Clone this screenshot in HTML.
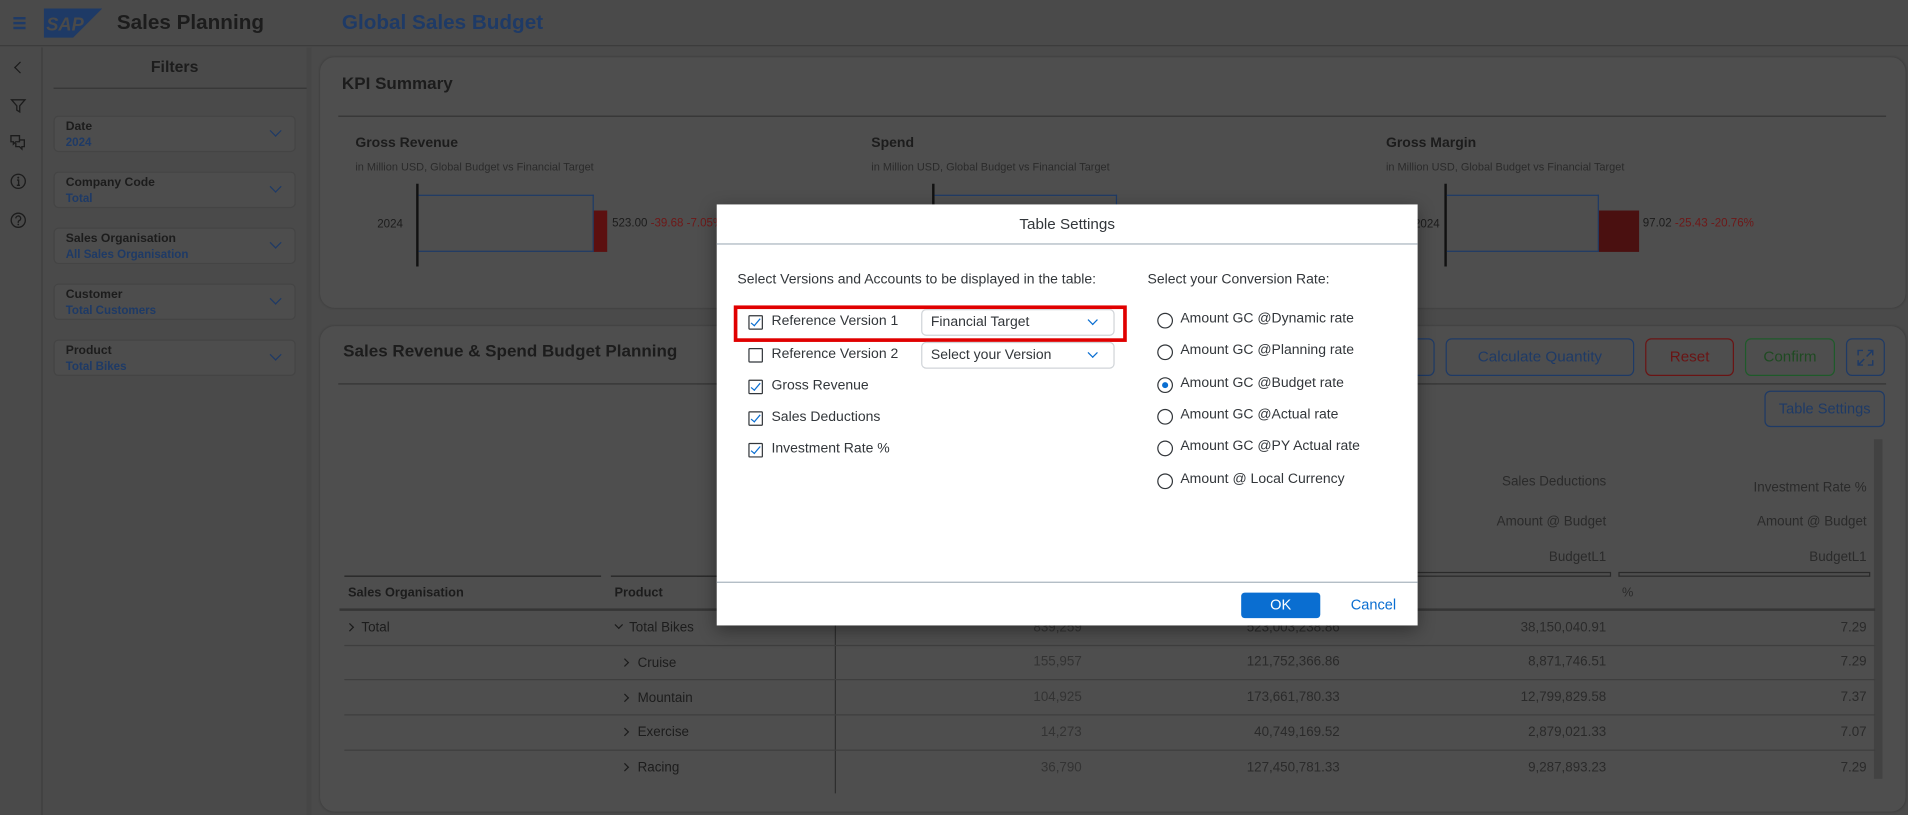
<!DOCTYPE html>
<html><head><meta charset="utf-8"><style>
*{margin:0;padding:0;box-sizing:border-box}
html,body{width:1908px;height:815px;overflow:hidden;background:#4a4a4a}
#w{position:absolute;left:0;top:0;width:1568px;height:670px;transform:scale(1.21684);transform-origin:0 0;font-family:"Liberation Sans",sans-serif;color:#1c1c1c;font-size:11px}
.a{position:absolute;white-space:nowrap}
.card{position:absolute;background:#4e4e4e;border-radius:12px;box-shadow:0 0 2px rgba(0,0,0,.25)}
.hl{position:absolute;height:1px;background:#333}
.fb{position:absolute;left:44px;width:199px;height:30px;border:1px solid #444;border-radius:4px;background:#4d4d4d}
.fb .l{position:absolute;left:9px;top:3px;font-size:10px;font-weight:bold;color:#1c1c1c}
.fb .v{position:absolute;left:9px;top:16px;font-size:9.5px;font-weight:bold;color:#1e3a66}
.chev{position:absolute;width:7px;height:7px;border-right:1.3px solid #1e3a66;border-bottom:1.3px solid #1e3a66;transform:rotate(45deg)}
.rc{position:absolute;width:5px;height:5px;border-right:1.3px solid #1c1c1c;border-bottom:1.3px solid #1c1c1c;transform:rotate(-45deg)}
.btn{position:absolute;height:31px;border:1px solid #1e3a66;border-radius:5px;color:#1e3a66;font-size:12.5px;text-align:center;line-height:29px}
.num{position:absolute;text-align:right;color:#2a2a2a;font-size:11px}
.dlg{position:absolute;left:589px;top:168px;width:576px;height:346px;background:#fff;color:#32363a;box-shadow:0 4px 14px rgba(0,0,0,.4)}
.cb{position:absolute;left:26px;width:12px;height:12px;border:1.3px solid #32363a;border-radius:1px}
.cb.on::after{content:"";position:absolute;left:3px;top:0px;width:3px;height:7px;border-right:1.3px solid #0a6ed1;border-bottom:1.3px solid #0a6ed1;transform:rotate(40deg)}
.rd{position:absolute;left:362px;width:13px;height:13px;border:1.4px solid #32363a;border-radius:50%}
.rd.on::after{content:"";position:absolute;left:2.5px;top:2.5px;width:5px;height:5px;border-radius:50%;background:#0a6ed1}
.dt{font-size:11.5px}
.sel{position:absolute;left:168px;width:159px;height:22px;border:1px solid #d0d4d8;border-radius:4px;font-size:11.5px;padding:4px 7px}
.sel .chev{right:14px;top:5px;border-color:#0a6ed1;width:6px;height:6px;border-width:0 1px 1px 0}
</style></head><body><div id="w">
<div class="a" style="left:0;top:0;width:1568px;height:38px;background:#4a4a4a;border-bottom:1px solid #3c3c3c"></div>
<div class="a" style="left:11px;top:14px;width:10px;height:2px;background:#1e3a66;box-shadow:0 4px 0 #1e3a66,0 8px 0 #1e3a66"></div>
<svg class="a" style="left:36px;top:7px" width="48" height="24" viewBox="0 0 48 24"><polygon points="0,0 48,0 24,24 0,24" fill="#1e3a66"/><text x="2" y="18" font-family="Liberation Sans" font-weight="bold" font-style="italic" font-size="15" fill="#4a4a4a">SAP</text></svg>
<div class="a" style="left:96px;top:9px;font-size:17px;font-weight:bold;color:#1c1c1c">Sales Planning</div>
<div class="a" style="left:281px;top:9px;font-size:17px;font-weight:bold;color:#1e3a66">Global Sales Budget</div>
<div class="a" style="left:34px;top:39px;width:1px;height:631px;background:#3e3e3e"></div>
<div class="a" style="left:13px;top:52px;width:7px;height:7px;border-left:1.6px solid #1c1c1c;border-bottom:1.6px solid #1c1c1c;transform:rotate(45deg)"></div>
<svg class="a" style="left:8px;top:80px" width="14" height="14" viewBox="0 0 14 14"><path d="M1.5 2h11l-4.3 5v5l-2.4-1.5V7z" fill="none" stroke="#1c1c1c" stroke-width="1.1"/></svg>
<svg class="a" style="left:8px;top:110px" width="14" height="14" viewBox="0 0 14 14"><path d="M1 1.5h7v5H5L3 8.5V6.5H1z M5 7.5v3h3l2 2v-2h2V5H8.5" fill="none" stroke="#1c1c1c" stroke-width="1.1"/></svg>
<svg class="a" style="left:8px;top:142px" width="14" height="14" viewBox="0 0 14 14"><circle cx="7" cy="7" r="5.8" fill="none" stroke="#1c1c1c" stroke-width="1.1"/><path d="M6 6h1.3v4.3M5.8 10.3h2.6" stroke="#1c1c1c" fill="none" stroke-width="1.1"/><circle cx="7" cy="4" r=".8" fill="#1c1c1c"/></svg>
<svg class="a" style="left:8px;top:174px" width="14" height="14" viewBox="0 0 14 14"><circle cx="7" cy="7" r="5.8" fill="none" stroke="#1c1c1c" stroke-width="1.1"/><path d="M5 5.5a2 2 0 1 1 2.6 1.9c-.5.2-.6.6-.6 1.2v.6" stroke="#1c1c1c" fill="none" stroke-width="1.1"/><circle cx="7" cy="10.5" r=".7" fill="#1c1c1c"/></svg>
<div class="a" style="left:252px;top:39px;width:4px;height:631px;background:#464646"></div>
<div class="a" style="left:124px;top:47px;font-size:13px;font-weight:bold">Filters</div>
<div class="hl" style="left:44px;top:72px;width:208px;background:#353535"></div>
<div class="fb" style="top:95px"><div class="l">Date</div><div class="v">2024</div><div class="chev" style="left:178px;top:8px"></div></div>
<div class="fb" style="top:141px"><div class="l">Company Code</div><div class="v">Total</div><div class="chev" style="left:178px;top:8px"></div></div>
<div class="fb" style="top:187px"><div class="l">Sales Organisation</div><div class="v">All Sales Organisation</div><div class="chev" style="left:178px;top:8px"></div></div>
<div class="fb" style="top:233px"><div class="l">Customer</div><div class="v">Total Customers</div><div class="chev" style="left:178px;top:8px"></div></div>
<div class="fb" style="top:279px"><div class="l">Product</div><div class="v">Total Bikes</div><div class="chev" style="left:178px;top:8px"></div></div>
<div class="card" style="left:263px;top:47px;width:1303px;height:206px"></div>
<div class="a" style="left:281px;top:60px;font-size:14px;font-weight:bold">KPI Summary</div>
<div class="hl" style="left:278px;top:95px;width:1272px"></div>
<div class="a" style="left:292px;top:112px;font-size:11.5px;font-weight:bold">Gross Revenue</div>
<div class="a" style="left:292px;top:132px;font-size:9px;color:#2a2a2a">in Million USD, Global Budget vs Financial Target</div>
<div class="a" style="left:310px;top:179px;font-size:9.5px">2024</div>
<div class="a" style="left:342px;top:151px;width:2px;height:68px;background:#111"></div>
<div class="a" style="left:344px;top:160px;width:144px;height:47px;border:1.5px solid #1e3a66;border-left:none"></div>
<div class="a" style="left:488px;top:173px;width:11px;height:34px;background:#5c1010"></div>
<div class="a" style="left:503px;top:178px;font-size:9.5px">523.00 <span style="color:#6e1818">-39.68 -7.05%</span></div>
<div class="a" style="left:716px;top:112px;font-size:11.5px;font-weight:bold">Spend</div>
<div class="a" style="left:716px;top:132px;font-size:9px;color:#2a2a2a">in Million USD, Global Budget vs Financial Target</div>
<div class="a" style="left:766px;top:151px;width:2px;height:20px;background:#111"></div>
<div class="a" style="left:768px;top:160px;width:150px;height:12px;border:1.5px solid #1e3a66;border-left:none;border-bottom:none"></div>
<div class="a" style="left:1139px;top:112px;font-size:11.5px;font-weight:bold">Gross Margin</div>
<div class="a" style="left:1139px;top:132px;font-size:9px;color:#2a2a2a">in Million USD, Global Budget vs Financial Target</div>
<div class="a" style="left:1162px;top:179px;font-size:9.5px">2024</div>
<div class="a" style="left:1187px;top:151px;width:2px;height:68px;background:#111"></div>
<div class="a" style="left:1189px;top:160px;width:125px;height:47px;border:1.5px solid #1e3a66;border-left:none"></div>
<div class="a" style="left:1314px;top:173px;width:33px;height:34px;background:#4a1010"></div>
<div class="a" style="left:1350px;top:178px;font-size:9.5px">97.02 <span style="color:#6e1818">-25.43 -20.76%</span></div>
<div class="card" style="left:263px;top:268px;width:1303px;height:399px"></div>
<div class="a" style="left:282px;top:280px;font-size:14px;font-weight:bold">Sales Revenue &amp; Spend Budget Planning</div>
<div class="hl" style="left:278px;top:315px;width:1272px"></div>
<div class="btn" style="left:1140px;top:278px;width:39px"></div>
<div class="btn" style="left:1188px;top:278px;width:155px">Calculate Quantity</div>
<div class="btn" style="left:1352px;top:278px;width:73px;border-color:#6a1414;color:#6a1414">Reset</div>
<div class="btn" style="left:1434px;top:278px;width:74px;border-color:#1f5a2a;color:#1f4a22">Confirm</div>
<div class="btn" style="left:1517px;top:278px;width:32px"><svg width="14" height="14" viewBox="0 0 14 14" style="margin-top:8px"><path d="M1 5V1h4M9 1h4v4M13 9v4H9M5 13H1V9M8 6l5-5M1 13l5-5" fill="none" stroke="#1e3a66" stroke-width="1.2"/></svg></div>
<div class="btn" style="left:1450px;top:321px;width:99px;height:30px;line-height:28px;font-size:12px">Table Settings</div>
<div class="a" style="left:1540px;top:361px;width:7px;height:279px;background:#424242"></div>
<div class="num" style="left:1180px;top:390px;width:140px">Sales Deductions</div>
<div class="num" style="left:1380px;top:395px;width:154px">Investment Rate %</div>
<div class="num" style="left:1180px;top:423px;width:140px">Amount @ Budget</div>
<div class="num" style="left:1380px;top:423px;width:154px">Amount @ Budget</div>
<div class="num" style="left:1180px;top:452px;width:140px">BudgetL1</div>
<div class="num" style="left:1380px;top:452px;width:154px">BudgetL1</div>
<div class="a" style="left:1100px;top:470px;width:224px;height:4px;border:1px solid #2a2a2a"></div>
<div class="a" style="left:1330px;top:470px;width:207px;height:4px;border:1px solid #2a2a2a"></div>
<div class="a" style="left:1333px;top:481px;font-size:10.5px;color:#2a2a2a">%</div>
<div class="hl" style="left:283px;top:473px;width:211px;background:#222"></div>
<div class="hl" style="left:502px;top:473px;width:90px;background:#222"></div>
<div class="a" style="left:286px;top:481px;font-size:10.5px;font-weight:bold">Sales Organisation</div>
<div class="a" style="left:505px;top:481px;font-size:10.5px;font-weight:bold">Product</div>
<div class="a" style="left:279px;top:500px;width:1262px;height:2px;background:#353535"></div>
<div class="a" style="left:686px;top:502px;width:1px;height:150px;background:#2e2e2e"></div>
<div class="rc" style="left:285px;top:513px"></div><div class="a" style="left:297px;top:510px">Total</div>
<div class="a" style="left:506px;top:511px;width:5px;height:5px;border-right:1.3px solid #1c1c1c;border-bottom:1.3px solid #1c1c1c;transform:rotate(45deg)"></div><div class="a" style="left:517px;top:510px">Total Bikes</div>
<div class="rc" style="left:511px;top:542px"></div><div class="a" style="left:524px;top:539px">Cruise</div>
<div class="rc" style="left:511px;top:571px"></div><div class="a" style="left:524px;top:568px">Mountain</div>
<div class="rc" style="left:511px;top:599px"></div><div class="a" style="left:524px;top:596px">Exercise</div>
<div class="rc" style="left:511px;top:628px"></div><div class="a" style="left:524px;top:625px">Racing</div>
<div class="hl" style="left:283px;top:530px;width:1258px;background:#3e3e3e"></div>
<div class="hl" style="left:283px;top:558px;width:1258px;background:#3e3e3e"></div>
<div class="hl" style="left:283px;top:587px;width:1258px;background:#3e3e3e"></div>
<div class="hl" style="left:283px;top:616px;width:1258px;background:#3e3e3e"></div>
<div class="num" style="left:760px;top:510px;width:129px;color:#333">839,259</div>
<div class="num" style="left:760px;top:538px;width:129px;color:#333">155,957</div>
<div class="num" style="left:760px;top:567px;width:129px;color:#333">104,925</div>
<div class="num" style="left:760px;top:596px;width:129px;color:#333">14,273</div>
<div class="num" style="left:760px;top:625px;width:129px;color:#333">36,790</div>
<div class="num" style="left:900px;top:510px;width:201px">523,003,238.86</div>
<div class="num" style="left:900px;top:538px;width:201px">121,752,366.86</div>
<div class="num" style="left:900px;top:567px;width:201px">173,661,780.33</div>
<div class="num" style="left:900px;top:596px;width:201px">40,749,169.52</div>
<div class="num" style="left:900px;top:625px;width:201px">127,450,781.33</div>
<div class="num" style="left:1120px;top:510px;width:200px">38,150,040.91</div>
<div class="num" style="left:1120px;top:538px;width:200px">8,871,746.51</div>
<div class="num" style="left:1120px;top:567px;width:200px">12,799,829.58</div>
<div class="num" style="left:1120px;top:596px;width:200px">2,879,021.33</div>
<div class="num" style="left:1120px;top:625px;width:200px">9,287,893.23</div>
<div class="num" style="left:1400px;top:510px;width:134px">7.29</div>
<div class="num" style="left:1400px;top:538px;width:134px">7.29</div>
<div class="num" style="left:1400px;top:567px;width:134px">7.37</div>
<div class="num" style="left:1400px;top:596px;width:134px">7.07</div>
<div class="num" style="left:1400px;top:625px;width:134px">7.29</div>
<div class="dlg">
<div class="a" style="left:0;width:576px;top:9px;text-align:center;font-size:12.5px">Table Settings</div>
<div class="a" style="left:0;top:32px;width:576px;height:1px;background:#a9b4be"></div>
<div class="a dt" style="left:17px;top:56px">Select Versions and Accounts to be displayed in the table:</div>
<div class="a dt" style="left:354px;top:56px">Select your Conversion Rate:</div>
<div class="a" style="left:14px;top:83px;width:323px;height:30px;border:3px solid #e00000"></div>
<div class="cb on" style="top:91px"></div><div class="a dt" style="left:45px;top:90px">Reference Version 1</div>
<div class="sel" style="top:86px">Financial Target<div class="chev"></div></div>
<div class="cb" style="top:118px"></div><div class="a dt" style="left:45px;top:117px">Reference Version 2</div>
<div class="sel" style="top:113px">Select your Version<div class="chev"></div></div>
<div class="cb on" style="top:144px"></div><div class="a dt" style="left:45px;top:143px">Gross Revenue</div>
<div class="cb on" style="top:170px"></div><div class="a dt" style="left:45px;top:169px">Sales Deductions</div>
<div class="cb on" style="top:196px"></div><div class="a dt" style="left:45px;top:195px">Investment Rate %</div>
<div class="rd" style="top:89px"></div><div class="a dt" style="left:381px;top:88px">Amount GC @Dynamic rate</div>
<div class="rd" style="top:115px"></div><div class="a dt" style="left:381px;top:114px">Amount GC @Planning rate</div>
<div class="rd on" style="top:142px"></div><div class="a dt" style="left:381px;top:141px">Amount GC @Budget rate</div>
<div class="rd" style="top:168px"></div><div class="a dt" style="left:381px;top:167px">Amount GC @Actual rate</div>
<div class="rd" style="top:194px"></div><div class="a dt" style="left:381px;top:193px">Amount GC @PY Actual rate</div>
<div class="rd" style="top:221px"></div><div class="a dt" style="left:381px;top:220px">Amount @ Local Currency</div>
<div class="a" style="left:0;top:310px;width:576px;height:1px;background:#a9b4be"></div>
<div class="a" style="left:431px;top:319px;width:65px;height:21px;background:#0a6ed1;border-radius:3px;color:#fff;text-align:center;line-height:21px;font-size:12px">OK</div>
<div class="a" style="left:521px;top:322px;color:#0a6ed1;font-size:12px">Cancel</div>
</div>
</div></body></html>
